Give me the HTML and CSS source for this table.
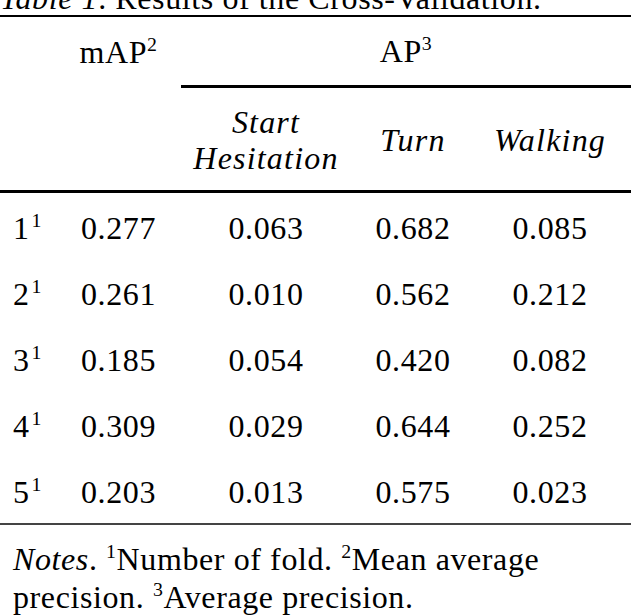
FILE: index.html
```html
<!DOCTYPE html>
<html>
<head>
<meta charset="utf-8">
<link rel="stylesheet" href="styles.css">
</head>
<body>
<div class="page">
  <p class="caption"><i>Table 1</i>. Results of the Cross-Validation.</p>
  <table class="results">
    <colgroup>
      <col class="c0"><col class="c1"><col class="c2"><col class="c3"><col class="c4">
    </colgroup>
    <thead>
      <tr class="h1">
        <th></th>
        <th class="num">mAP<sup>2</sup></th>
        <th class="span" colspan="3">AP<sup>3</sup></th>
      </tr>
      <tr class="h2">
        <th></th>
        <th></th>
        <th class="cls">Start<br>Hesitation</th>
        <th class="cls">Turn</th>
        <th class="cls">Walking</th>
      </tr>
    </thead>
    <tbody>
      <tr><td class="fold">1<sup>1</sup></td><td>0.277</td><td>0.063</td><td>0.682</td><td>0.085</td></tr>
      <tr><td class="fold">2<sup>1</sup></td><td>0.261</td><td>0.010</td><td>0.562</td><td>0.212</td></tr>
      <tr><td class="fold">3<sup>1</sup></td><td>0.185</td><td>0.054</td><td>0.420</td><td>0.082</td></tr>
      <tr><td class="fold">4<sup>1</sup></td><td>0.309</td><td>0.029</td><td>0.644</td><td>0.252</td></tr>
      <tr><td class="fold">5<sup>1</sup></td><td>0.203</td><td>0.013</td><td>0.575</td><td>0.023</td></tr>
    </tbody>
  </table>
  <p class="notes"><i>Notes</i>. <sup>1</sup>Number of fold. <sup>2</sup>Mean average precision. <sup>3</sup>Average precision.</p>
</div>
</body>
</html>
```
FILE: styles.css
```css
html, body {
  margin: 0;
  padding: 0;
  background: #fff;
}
.page {
  width: 631px;
  font-family: "Liberation Serif", "Times New Roman", serif;
  font-size: 32px;
  color: #000;
  letter-spacing: 0.6px;
}
.caption {
  margin: -19px 0 0 0;
  line-height: 34px;
}
.results {
  width: 631px;
  border-collapse: collapse;
  table-layout: fixed;
  border-top: 2px solid #000;
}
.c0 { width: 62px; }
.c1 { width: 119px; }
.c2 { width: 176px; }
.c3 { width: 118px; }
.c4 { width: 156px; }
.results th, .results td {
  padding: 0 6px 0 0;
  font-weight: normal;
  text-align: center;
  line-height: 36px;
}
.h1 th {
  height: 68px;
  vertical-align: middle;
}
.h1 .span {
  padding-right: 0;
  border-bottom: 3px solid #000;
}
.h2 th {
  height: 100px;
  padding-top: 2px;
  border-bottom: 3px solid #000;
}
.h2 .cls {
  font-style: italic;
  letter-spacing: 1.2px;
}
.results td {
  height: 63px;
  padding-top: 3px;
}
.results tbody tr:last-child td {
  border-bottom: 2px solid #444;
  height: 63px;
}
.results td.fold {
  text-align: left;
  padding-left: 13px;
}
sup {
  font-size: 0.62em;
  line-height: 0;
  vertical-align: 0.6em;
}
.fold sup {
  padding-left: 2px;
}
.notes {
  margin: 15px 0 0 13px;
  line-height: 38px;
}
```
